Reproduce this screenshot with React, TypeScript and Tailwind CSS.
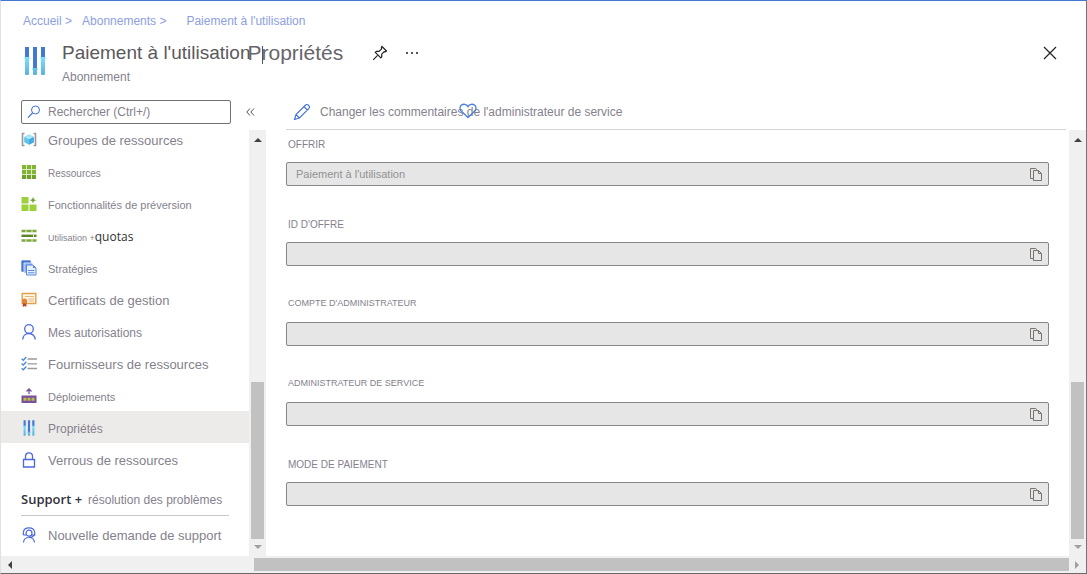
import React from "react";

function SlidersIcon({ className }: { className: string }) {
  return (
    <svg viewBox="0 0 22 28" className={className} aria-hidden="true">
      <defs>
        <linearGradient id="sliderTube" x1="0" y1="0" x2="0" y2="1">
          <stop offset="0" stopColor="#7be3fb" />
          <stop offset="1" stopColor="#5bb0d8" />
        </linearGradient>
      </defs>
      <path d="M1 0h4v11H1zM9 0h4v22H9zM17 0h4v11h-4z" fill="#4478d4" />
      <path
        d="M1 10h4l1 1-1 1v15a1 1 0 0 1-1 1H2a1 1 0 0 1-1-1V12l-1-1zM17 10h4l1 1-1 1v15a1 1 0 0 1-1 1h-2a1 1 0 0 1-1-1V12l-1-1zM9 21h4l1 1-1 1v4a1 1 0 0 1-1 1h-2a1 1 0 0 1-1-1v-4l-1-1z"
        fill="url(#sliderTube)"
      />
    </svg>
  );
}

function SearchIcon() {
  return (
    <svg viewBox="0 0 14 14" className="size-[14px] shrink-0" fill="none" stroke="#3f6fd6" aria-hidden="true">
      <circle cx="8.5" cy="5" r="4" />
      <path d="M5.6 7.9 1 12.6" strokeWidth="1.3" />
    </svg>
  );
}

function PinIcon() {
  return (
    <svg viewBox="0 0 16 16" className="size-4" fill="none" stroke="#222" strokeWidth="1.2" aria-hidden="true">
      <path d="M10 1.500 14.500 6l-1.200.8-1.100-.2-2.500 2.600.1 2.500-1 1.200-5.500-5.600 1.200-1 2.500.1 2.600-2.500-.2-1.200zM5.800 10.200 1.200 14.800" />
    </svg>
  );
}

function CloseIcon() {
  return (
    <svg viewBox="0 0 14 14" className="size-[14px]" fill="none" stroke="#222" strokeWidth="1.2" aria-hidden="true">
      <path d="M1 1l12 12M13 1 1 13" />
    </svg>
  );
}

function PencilIcon() {
  return (
    <svg viewBox="0 0 18 18" className="size-[18px] shrink-0" fill="none" stroke="#3f6fd6" strokeWidth="1.1" aria-hidden="true">
      <path d="M1.500 16.500 3 11.600 12.600 2a1.800 1.800 0 0 1 2.600 0l.8.8a1.800 1.800 0 0 1 0 2.600L6.400 15zM3 11.600l3.400 3.400M11 3.600 14.400 7" />
    </svg>
  );
}

function HeartIcon() {
  return (
    <svg viewBox="0 0 18 16" className="h-4 w-[18px]" fill="none" stroke="#4a80dc" strokeWidth="1.3" aria-hidden="true">
      <path d="M9 14.500 2 7.700C.6 6.200.7 3.600 2.200 2.300 4.300.6 7.600 1 9 3.600 10.400 1 13.700.6 15.800 2.300c1.500 1.300 1.600 3.900.2 5.400z" />
    </svg>
  );
}

function CopyIcon() {
  return (
    <svg viewBox="0 0 12 13" className="h-[13px] w-3" fill="none" stroke="#77736f" aria-hidden="true">
      <path d="M3.500 10.500h-3V.5h5l1.500 1.200M3.500 2.500h5l3 3v7h-8zM8.500 2.500v3h3" />
    </svg>
  );
}

const glyphs: Record<string, React.ReactNode> = {
  groups: (
    <>
      <path d="M3.500 1.500h-2v12h2M12.500 1.500h2v12h-2" fill="none" stroke="#9a9a9a" strokeWidth="1.600" />
      <path d="M8 2.500 12.800 5v5.200L8 12.800l-4.800-2.600V5z" fill="#5fc3ec" />
      <path d="M8 2.500 12.800 5 8 7.500 3.200 5z" fill="#a5e6fb" />
      <path d="M8 7.500 12.800 5v5.200L8 12.800z" fill="#49a9df" />
    </>
  ),
  grid: (
    <>
      <path d="M1 1h14v14H1z" fill="#6f9f2c" />
      <path d="M1 1h4v4H1zM6 1h4v4H6zM11 1h4v4h-4zM1 6h4v4H1zM6 6h4v4H6zM11 6h4v4h-4z" fill="#83b535" />
      <path d="M5.500 1v14M10.500 1v14M1 5.500h14M1 10.500h14" stroke="#dbe9c3" />
    </>
  ),
  preview: (
    <>
      <path d="M.5 1h7v6.500h-7zM.5 8.500h7V15h-7zM8.500 8.500h7V15h-7z" fill="#9dd13c" />
      <path d="M12 .8l.9 2.500 2.500.9-2.500.9L12 7.600l-.9-2.500-2.500-.9 2.500-.9z" fill="#6f9f2c" />
    </>
  ),
  quotas: (
    <>
      <path d="M.5 3h15M.5 12.500h15" stroke="#7fa83f" strokeWidth="2.400" />
      <path d="M.5 7.800h15" stroke="#5c852a" strokeWidth="2.400" />
      <path d="M5 1.500v3M11 1.500v3M12.500 6.500v3M5 11v3M11 11v3" stroke="#e4efd4" />
    </>
  ),
  policy: (
    <>
      <path d="M.8.8h8.500v10.500H.8z" fill="#4d7fdc" stroke="#3668c9" strokeWidth=".8" />
      <path d="M3 3h8.500v10H3z" fill="#8db2f0" stroke="#dfe9fb" strokeWidth=".8" />
      <path d="M5.500 5H12l3 3v7H5.500z" fill="#e9f1ff" stroke="#4b79d6" strokeWidth=".9" />
      <path d="M12 5v3h3z" fill="#5688df" />
      <path d="M7 10.500h6.500M7 12.800h6.500" stroke="#5688df" />
    </>
  ),
  certificate: (
    <>
      <path d="M1.200 1.500h13.600v10H1.200z" fill="#fff6e8" stroke="#e0a24b" strokeWidth="1.400" />
      <path d="M4 4.500h9M7 7h6M8 9h5" stroke="#e3b67a" strokeWidth="1.200" />
      <path d="M1.800 10h3.600v5l-1.800-1-1.800 1z" fill="#b9472c" />
      <circle cx="3.600" cy="9" r="2.600" fill="#e2843a" />
    </>
  ),
  person: (
    <g fill="none" stroke="#4a69da" strokeWidth="1.300">
      <circle cx="8" cy="5" r="4.300" />
      <path d="M1.800 15.500c0-3.500 2.600-6 6.200-6s6.200 2.500 6.200 6" />
    </g>
  ),
  checklist: (
    <>
      <path d="M6.500 3H16M6.500 7.800H16M6.500 12.500H16" stroke="#9a9a9a" strokeWidth="1.300" />
      <path d="m.6 2.800 1.700 1.500L5.300 1M.6 7.600l1.700 1.500 3-3.300M.6 12.300l1.700 1.500 3-3.300" fill="none" stroke="#4a86d9" strokeWidth="1.300" />
    </>
  ),
  deploy: (
    <>
      <path d="M.5 7.500h15V15H.5z" fill="#79519b" />
      <path d="M2.500 9.800h3v3h-3zM6.500 9.800h3v3h-3zM10.500 9.800h3v3h-3z" fill="#b7bf45" />
      <path d="M8 6V1.200M5.500 3.500 8 1l2.500 2.500" fill="none" stroke="#79519b" strokeWidth="1.300" />
    </>
  ),
  lock: (
    <g fill="none" stroke="#4a69da" strokeWidth="1.300">
      <path d="M2.500 7.500h11v7.500h-11zM4.500 7.500V4.200C4.500 2 6 .8 8 .8s3.500 1.200 3.500 3.400v3.300" />
    </g>
  ),
  support: (
    <g fill="none" stroke="#4a69da" strokeWidth="1.200">
      <circle cx="8" cy="6.200" r="3" />
      <path d="M2.300 8V5.500C2.600 2.500 5 .8 8 .8s5.400 1.700 5.700 4.700V8H11M2.300 8H5M13.700 8 11 10H8M2.500 15.500c.2-3 2.300-5 5.500-5s5.300 2 5.500 5" />
    </g>
  ),
};

interface Item {
  icon: string;
  label: React.ReactNode;
  size: string;
  active?: boolean;
}

const items: Item[] = [
  { icon: "groups", label: "Groupes de ressources", size: "text-[13px]" },
  { icon: "grid", label: "Ressources", size: "text-[10px]" },
  { icon: "preview", label: "Fonctionnalités de préversion", size: "text-[11px]" },
  {
    icon: "quotas",
    label: (
      <>
        Utilisation +
        <span className="font-['Open_Sans',sans-serif] text-[12px] text-[#333]">quotas</span>
      </>
    ),
    size: "text-[9px]",
  },
  { icon: "policy", label: "Stratégies", size: "text-[11px]" },
  { icon: "certificate", label: "Certificats de gestion", size: "text-[13px]" },
  { icon: "person", label: "Mes autorisations", size: "text-[12px]" },
  { icon: "checklist", label: "Fournisseurs de ressources", size: "text-[13px]" },
  { icon: "deploy", label: "Déploiements", size: "text-[11px]" },
  { icon: "sliders", label: "Propriétés", size: "text-[12px]", active: true },
  { icon: "lock", label: "Verrous de ressources", size: "text-[13px]" },
];

function NavItem({ icon, label, size, active }: Item) {
  return (
    <li>
      <a
        href="#"
        aria-current={active ? "page" : undefined}
        className={`flex h-8 items-center gap-[11px] pt-[2px] pl-5 ${active ? "bg-[#edebe9]" : ""}`}
      >
        <span className="flex w-4 shrink-0 justify-center">
          {icon === "sliders" ? (
            <SlidersIcon className="h-4 w-3" />
          ) : (
            <svg viewBox="0 0 16 16" className="size-4" aria-hidden="true">
              {glyphs[icon]}
            </svg>
          )}
        </span>
        <span className={`pt-[2px] whitespace-nowrap ${size}`}>{label}</span>
      </a>
    </li>
  );
}

function VerticalScrollbar() {
  return (
    <div className="flex w-[17px] shrink-0 flex-col items-center bg-[#f0f0f0] pt-[7px] pb-[6px]" aria-hidden="true">
      <svg viewBox="0 0 8 5" className="h-[5px] w-2" fill="#404040">
        <path d="M0 5 4 1l4 4z" />
      </svg>
      <div className="flex min-h-0 w-[13px] grow flex-col justify-end pt-[5px] pb-[6px]">
        <div className="h-[40%] bg-[#c1c1c1]" />
      </div>
      <svg viewBox="0 0 8 5" className="h-[5px] w-2" fill="#a0a0a0">
        <path d="M0 0h8L4 4z" />
      </svg>
    </div>
  );
}

const fields = [
  { id: "offre", label: "OFFRIR", value: "Paiement à l'utilisation", size: "text-[10px]" },
  { id: "offre-id", label: "ID D'OFFRE", value: "", size: "text-[10px]" },
  { id: "compte-admin", label: "COMPTE D'ADMINISTRATEUR", value: "", size: "text-[9px]" },
  { id: "admin-service", label: "ADMINISTRATEUR DE SERVICE", value: "", size: "text-[9px]" },
  { id: "mode-paiement", label: "MODE DE PAIEMENT", value: "", size: "text-[10px]" },
];

export default function App() {
  return (
    <div className="flex h-screen flex-col border border-t-[#4478d0] border-r-[#757575] border-b-[#696969] border-l-[#e1e1e1] bg-white font-['Liberation_Sans',Arial,sans-serif] text-[#85818d]">
      <header className="flex h-[97px] shrink-0 flex-col pt-3 pl-[22px]">
        <nav aria-label="Fil d'Ariane" className="flex h-4 items-center text-[12px] whitespace-nowrap text-[#8d9ede]">
          <a href="#">Accueil &gt;</a>
          <a href="#" className="ml-[10px]">Abonnements &gt;</a>
          <a href="#" className="ml-5">Paiement à l'utilisation</a>
        </nav>
        <div className="flex pt-3">
          <SlidersIcon className="mt-[6px] h-7 w-6 shrink-0" />
          <div className="ml-[15px] min-w-0 grow">
            <div className="flex h-6 items-center">
              <h1 className="relative text-[19px] leading-6 whitespace-nowrap text-[#5c595d]">
                Paiement à l'utilisation
                <span className="absolute top-0 left-full -ml-[3px] text-[21px] text-[#67656b]">Propriétés</span>
                <span className="absolute top-[5px] left-full ml-3 h-[18px] w-px bg-[#55535a]" aria-hidden="true" />
              </h1>
              <button type="button" aria-label="Épingler" className="ml-[122px]">
                <PinIcon />
              </button>
              <button type="button" aria-label="Plus d'options" className="ml-[18px]">
                <svg viewBox="0 0 12 2" className="h-[2px] w-3" fill="#555" aria-hidden="true">
                  <path d="M0 0h2v2H0zM5 0h2v2H5zM10 0h2v2h-2z" />
                </svg>
              </button>
              <button type="button" aria-label="Fermer" className="mr-[29px] ml-auto">
                <CloseIcon />
              </button>
            </div>
            <p className="text-[12px] leading-6">Abonnement</p>
          </div>
        </div>
      </header>

      <div className="flex min-h-0 grow">
        <aside className="flex w-[265px] shrink-0 flex-col">
          <div className="flex h-8 shrink-0 items-start gap-[15px] pt-[2px] pl-5">
            <label className="flex h-6 w-[210px] items-center gap-[7px] rounded-xs border border-[#75736f] bg-white px-[5px]">
              <SearchIcon />
              <input
                type="search"
                aria-label="Rechercher"
                placeholder="Rechercher (Ctrl+/)"
                className="min-w-0 grow text-[12px] outline-none placeholder:text-[#85818d]"
              />
            </label>
            <button type="button" aria-label="Réduire le menu" className="h-6 text-[#555]">
              <svg viewBox="0 0 9 8" className="h-2 w-[9px]" fill="none" stroke="currentColor" aria-hidden="true">
                <path d="M4 .5.8 4 4 7.500M8 .5 4.800 4 8 7.500" />
              </svg>
            </button>
          </div>
          <div className="flex min-h-0 grow">
            <nav aria-label="Menu des ressources" className="flex min-w-0 grow flex-col justify-end overflow-hidden pb-[6px]">
              <ul>
                {items.map((item) => (
                  <NavItem key={item.icon} {...item} />
                ))}
              </ul>
              <h2 className="mr-5 mb-[2px] ml-5 flex h-[41px] shrink-0 items-center gap-[6px] border-b border-[#c8c8c8] pt-[10px] text-[12px] whitespace-nowrap">
                <span className="font-['Open_Sans',sans-serif] text-[13px] font-semibold text-[#33323a]">Support +</span>
                résolution des problèmes
              </h2>
              <ul>
                <NavItem icon="support" label="Nouvelle demande de support" size="text-[13px]" />
              </ul>
            </nav>
            <VerticalScrollbar />
          </div>
        </aside>

        <main className="flex min-w-0 grow flex-col">
          <div className="mx-5 flex h-8 shrink-0 items-center border-b border-[#d4d4d4] pb-1 pl-[7px]">
            <button type="button" className="flex items-center gap-[9px] text-[12px] whitespace-nowrap">
              <PencilIcon />
              <span className="relative">
                Changer les commentaires de l'administrateur de service
                <span className="absolute top-0 left-[139px]">
                  <HeartIcon />
                </span>
              </span>
            </button>
          </div>
          <div className="flex min-h-0 grow">
            <form className="flex min-w-0 grow flex-col gap-6 overflow-hidden px-5">
              {fields.map((field) => (
                <div key={field.id} className="shrink-0">
                  <label htmlFor={field.id} className={`flex h-8 items-center pb-1 pl-[2px] ${field.size}`}>
                    {field.label}
                  </label>
                  <div className="flex h-6 items-center rounded-xs border border-[#85878a] bg-[#e6e6e6] pr-[6px] pl-[9px]">
                    <input
                      id={field.id}
                      readOnly
                      defaultValue={field.value}
                      className="min-w-0 grow text-[11px] text-[#929094] outline-none"
                    />
                    <button type="button" aria-label="Copier">
                      <CopyIcon />
                    </button>
                  </div>
                </div>
              ))}
            </form>
            <VerticalScrollbar />
          </div>
        </main>
      </div>

      <div className="flex h-[17px] shrink-0 items-center bg-[#f0f0f0] px-[6px]" aria-hidden="true">
        <svg viewBox="0 0 5 8" className="h-2 w-[5px]" fill="#404040">
          <path d="M5 0v8L1 4z" />
        </svg>
        <div className="mr-[6px] ml-[242px] h-[13px] grow bg-[#c1c1c1]" />
        <svg viewBox="0 0 5 8" className="h-2 w-[5px]" fill="#a0a0a0">
          <path d="M0 0v8l4-4z" />
        </svg>
      </div>
    </div>
  );
}
